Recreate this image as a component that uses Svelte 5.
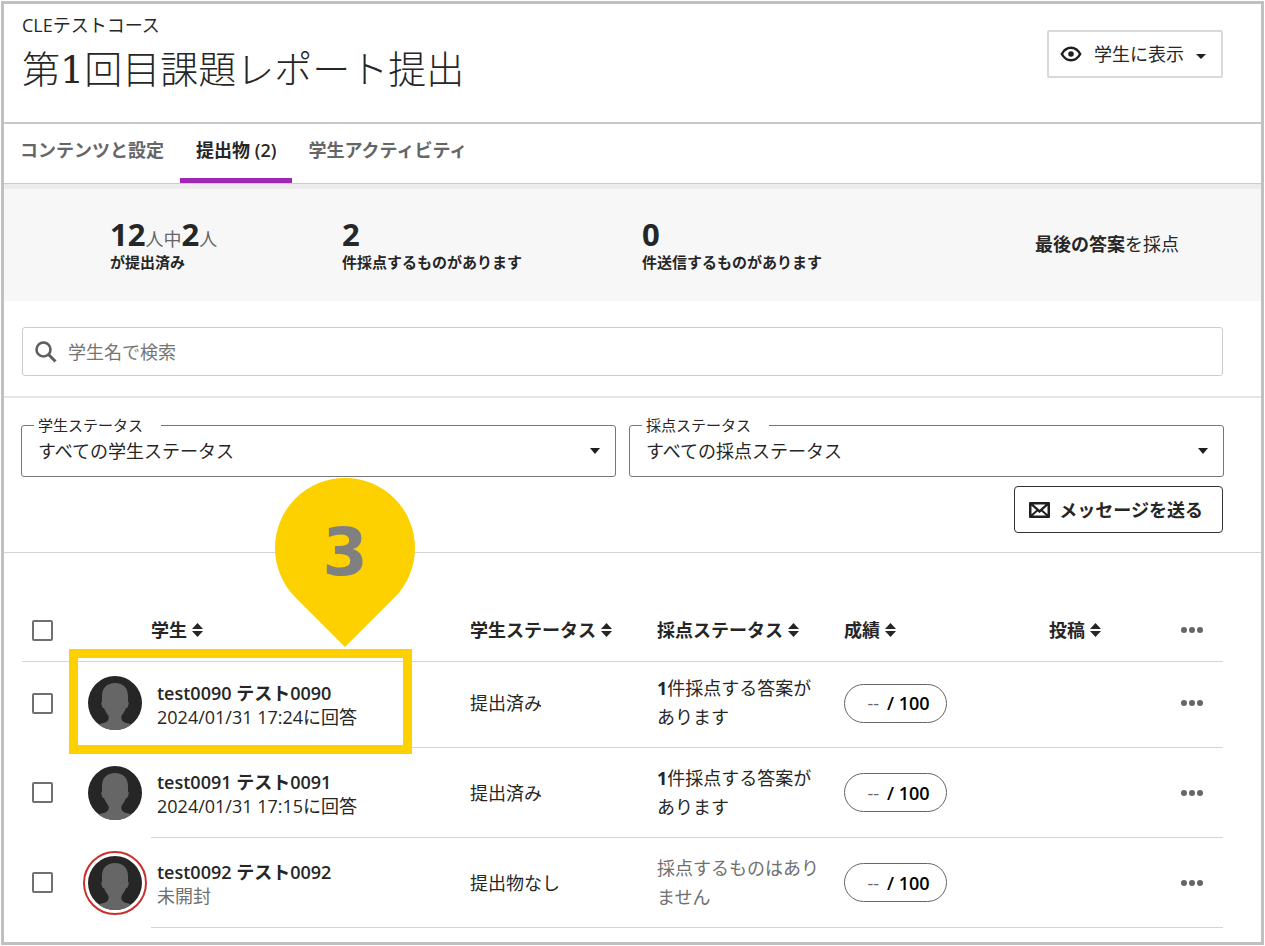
<script lang="ts">
	interface Submission {
		id: string;
		name: string;
		note: string;
		unopened: boolean;
		status: string;
		pending: number;
		grading: string;
	}

	const tabs = [
		{ id: 'content', label: 'コンテンツと設定' },
		{ id: 'submissions', label: '提出物 (2)' },
		{ id: 'activity', label: '学生アクティビティ' },
	];

	const submissions: Submission[] = [
		{
			id: 'test0090',
			name: 'test0090 テスト0090',
			note: '2024/01/31 17:24に回答',
			unopened: false,
			status: '提出済み',
			pending: 1,
			grading: '件採点する答案があります',
		},
		{
			id: 'test0091',
			name: 'test0091 テスト0091',
			note: '2024/01/31 17:15に回答',
			unopened: false,
			status: '提出済み',
			pending: 1,
			grading: '件採点する答案があります',
		},
		{
			id: 'test0092',
			name: 'test0092 テスト0092',
			note: '未開封',
			unopened: true,
			status: '提出物なし',
			pending: 0,
			grading: '採点するものはありません',
		},
	];

	const columns = [
		{ key: 'student', label: '学生' },
		{ key: 'status', label: '学生ステータス' },
		{ key: 'grading', label: '採点ステータス' },
		{ key: 'grade', label: '成績' },
		{ key: 'post', label: '投稿' },
	];

	const highlighted = 'test0090';

	let activeTab = 'submissions';
	let query = '';
	let selected: string[] = [];

	$: allSelected = selected.length === submissions.length;

	function toggleAll() {
		selected = allSelected ? [] : submissions.map((entry) => entry.id);
	}
</script>

<main class="page">
	<header class="page-head">
		<div class="titles">
			<p class="course">CLEテストコース</p>
			<h1>第1回目課題レポート提出</h1>
		</div>
		<button type="button" class="visibility">
			<svg width="22" height="16" viewBox="0 0 22 16" aria-hidden="true">
				<path d="M1.800 8C4 4 7 1.800 11 1.800S18 4 20.200 8C18 12 15 14.200 11 14.200S4 12 1.800 8Z" fill="none" stroke="#1f1f1f" stroke-width="2.500" />
				<circle cx="11" cy="8" r="2.800" fill="#1f1f1f" />
			</svg>
			<span>学生に表示</span>
			<svg class="caret" width="10" height="5" viewBox="0 0 10 5" aria-hidden="true">
				<path d="M0 0H10L5 5Z" fill="#1f1f1f" />
			</svg>
		</button>
	</header>

	<nav class="tabs">
		{#each tabs as tab}
			<button type="button" class="tab" class:active={activeTab === tab.id} on:click={() => (activeTab = tab.id)}>
				{tab.label}
			</button>
		{/each}
	</nav>

	<section class="stats">
		<div class="stat">
			<p class="figure"><strong>12</strong>人中<strong>2</strong>人</p>
			<p class="caption">が提出済み</p>
		</div>
		<div class="stat">
			<p class="figure"><strong>2</strong></p>
			<p class="caption">件採点するものがあります</p>
		</div>
		<div class="stat">
			<p class="figure"><strong>0</strong></p>
			<p class="caption">件送信するものがあります</p>
		</div>
		<p class="rule"><strong>最後の答案</strong>を採点</p>
	</section>

	<div class="search-row">
		<label class="search">
			<svg width="22" height="22" viewBox="0 0 22 22" aria-hidden="true">
				<circle cx="8.500" cy="8.500" r="7" fill="none" stroke="#5f5f5f" stroke-width="2.600" />
				<path d="M13.500 13.500L20.500 20.500" stroke="#5f5f5f" stroke-width="3" />
			</svg>
			<input type="text" placeholder="学生名で検索" aria-label="学生名で検索" bind:value={query} />
		</label>
	</div>

	<section class="filters">
		<div class="selects">
			<div class="field">
				<label for="student-status">学生ステータス</label>
				<select id="student-status">
					<option>すべての学生ステータス</option>
				</select>
				<svg width="10" height="6" viewBox="0 0 10 6" aria-hidden="true"><path d="M0 0H10L5 6Z" fill="#1f1f1f" /></svg>
			</div>
			<div class="field">
				<label for="grading-status">採点ステータス</label>
				<select id="grading-status">
					<option>すべての採点ステータス</option>
				</select>
				<svg width="10" height="6" viewBox="0 0 10 6" aria-hidden="true"><path d="M0 0H10L5 6Z" fill="#1f1f1f" /></svg>
			</div>
		</div>
		<button type="button" class="message">
			<svg width="21" height="16" viewBox="0 0 21 16" aria-hidden="true">
				<rect width="21" height="16" rx="1" fill="#1f1f1f" />
				<path d="M4.500 2.500H16.500L10.500 7.800ZM2.500 3.800L7.300 8L2.500 12.200ZM18.500 3.800L13.700 8L18.500 12.200ZM4 13.500L8.600 9.400L10.500 11L12.400 9.400L17 13.500Z" fill="#fff" />
			</svg>
			<span>メッセージを送る</span>
		</button>
	</section>

	<section class="roster">
		<table>
			<colgroup>
				<col class="col-check" />
				<col class="col-avatar" />
				<col />
				<col class="col-status" />
				<col class="col-grading" />
				<col class="col-grade" />
				<col class="col-post" />
				<col class="col-menu" />
			</colgroup>
			<thead>
				<tr>
					<th class="check">
						<input type="checkbox" aria-label="すべて選択" checked={allSelected} on:change={toggleAll} />
					</th>
					<th></th>
					{#each columns as column (column.key)}
						<th scope="col">
							<button type="button" class="sort">
								{column.label}
								<svg width="11" height="14" viewBox="0 0 11 14" aria-hidden="true">
									<path d="M5.500 0L11 6H0ZM5.500 14L11 8H0Z" fill="#262626" />
								</svg>
							</button>
						</th>
					{/each}
					<th class="menu">
						<button type="button" class="dots" aria-label="その他のオプション"><i></i><i></i><i></i></button>
					</th>
				</tr>
			</thead>
			<tbody>
				{#each submissions as entry (entry.id)}
					<tr>
						<td class="check">
							<input type="checkbox" aria-label={entry.name} value={entry.id} bind:group={selected} />
						</td>
						<td class="avatar-cell">
							<span class="avatar" class:unopened={entry.unopened}>
								<svg width="54" height="54" viewBox="0 0 54 54" aria-hidden="true">
									<circle cx="27" cy="27" r="27" fill="#262626" />
									<path
										d="M27 7C19 7 14 12 14 20V26C13 26 13 28 14 30C14.500 32 15 32 16 32C17.500 36 19.500 38 20.500 40C21.500 44 19 46 16 47C13.500 47.500 12 48 10.500 48.400A27 27 0 0 0 43.500 48.400C42 48 40.500 47.500 38 47C35 46 32.500 44 33.500 40C34.500 38 36.500 36 38 32C39 32 39.500 32 40 30C41 28 41 26 40 26V20C40 12 35 7 27 7Z"
										fill="#666"
									/>
								</svg>
							</span>
							{#if entry.id === highlighted}
								<div class="highlight"></div>
								<div class="pin">
									<svg width="140" height="169" viewBox="0 0 140 169" aria-hidden="true">
										<path d="M20.500 119.500A70 70 0 1 1 119.500 119.500L70 169Z" fill="#fdd000" />
									</svg>
									<span>3</span>
								</div>
							{/if}
						</td>
						<td class="student">
							<p class="name">{entry.name}</p>
							<p class="note" class:muted={entry.unopened}>{entry.note}</p>
						</td>
						<td>{entry.status}</td>
						<td class="grading" class:muted={entry.pending === 0}>
							{#if entry.pending > 0}<strong>{entry.pending}</strong>{/if}{entry.grading}
						</td>
						<td>
							<button type="button" class="pill"><span>--</span>/ 100</button>
						</td>
						<td></td>
						<td class="menu">
							<button type="button" class="dots" aria-label="その他のオプション"><i></i><i></i><i></i></button>
						</td>
					</tr>
				{/each}
			</tbody>
		</table>
	</section>
</main>

<style>
	:global(body) {
		background: #fff;
	}

	.page {
		box-sizing: border-box;
		margin: 1px;
		border: 3px solid #bfc0c0;
		padding-bottom: 14px;
		background: #fff;
		color: #262626;
		font-family: 'Open Sans', 'Noto Sans', 'Noto Sans CJK JP', sans-serif;
		font-size: 18px;
		line-height: 24px;
	}

	p,
	h1 {
		margin: 0;
	}

	button,
	input,
	select {
		font: inherit;
		color: inherit;
	}

	button {
		cursor: pointer;
	}

	.page-head {
		display: flex;
		justify-content: space-between;
		align-items: flex-start;
		padding: 9px 38px 25px 18px;
		border-bottom: 2px solid #c8c8c8;
	}

	h1 {
		margin-top: 6px;
		font-family: 'DejaVu Serif', 'Noto Sans CJK JP', serif;
		font-size: 38px;
		font-weight: 300;
		line-height: 54px;
	}

	.visibility {
		display: flex;
		align-items: center;
		gap: 12px;
		height: 48px;
		margin-top: 17px;
		padding: 0 15px 0 11px;
		border: 2px solid #d9d9d9;
		border-radius: 2px;
		background: #fff;
	}

	.caret {
		margin-top: 4px;
	}

	.tabs {
		display: flex;
		border-bottom: 1px solid #ccc;
	}

	.tab {
		height: 59px;
		padding: 0 16px 2px;
		border: 0;
		border-bottom: 5px solid transparent;
		background: none;
		color: #666;
		font-weight: 600;
	}

	.tab.active {
		border-color: #9e28b5;
		color: #262626;
	}

	.stats {
		display: grid;
		grid-template-columns: 232px 300px 1fr auto;
		align-items: start;
		padding: 35px 82px 31px 106px;
		border-top: 5px solid #ececec;
		background: #f7f7f7;
	}

	.figure {
		color: #666;
		line-height: 30px;
	}

	.figure strong {
		color: #262626;
		font-size: 31px;
		font-weight: 700;
		line-height: 20px;
	}

	.caption {
		font-size: 15px;
		font-weight: 700;
		line-height: 16px;
	}

	.rule {
		line-height: 40px;
	}

	.search-row {
		padding: 26px 38px 20px 18px;
		border-bottom: 2px solid #e6e6e6;
	}

	.search {
		display: flex;
		align-items: center;
		gap: 11px;
		height: 47px;
		padding: 0 12px;
		border: 1px solid #ccc;
		border-radius: 3px;
	}

	.search input {
		flex: 1;
		padding: 0;
		border: 0;
		outline: 0;
		background: none;
	}

	.search input::placeholder {
		color: #757575;
		opacity: 1;
	}

	.filters {
		display: flex;
		flex-direction: column;
		align-items: flex-end;
		gap: 9px;
		padding: 27px 37px 19px 17px;
		border-bottom: 1px solid #d4d4d4;
	}

	.selects {
		display: grid;
		grid-template-columns: 1fr 1fr;
		gap: 13px;
		width: 100%;
	}

	.field {
		position: relative;
	}

	.field label {
		position: absolute;
		top: -12px;
		left: 13px;
		padding: 0 18px 0 4px;
		background: #fff;
		font-size: 15px;
	}

	.field select {
		display: block;
		width: 100%;
		height: 52px;
		padding: 0 40px 0 16px;
		border: 1px solid #767676;
		border-radius: 3px;
		background: none;
		appearance: none;
	}

	.field svg {
		position: absolute;
		top: 23px;
		right: 16px;
		pointer-events: none;
	}

	.message {
		display: flex;
		align-items: center;
		gap: 9px;
		height: 47px;
		margin-right: 1px;
		padding: 0 19px 0 14px;
		border: 1px solid #333;
		border-radius: 4px;
		background: #fff;
		font-weight: 700;
	}

	.roster {
		padding: 46px 38px 0 18px;
	}

	table {
		width: 100%;
		table-layout: fixed;
		border-collapse: separate;
		border-spacing: 0;
	}

	.col-check {
		width: 61px;
	}

	.col-avatar {
		width: 68px;
	}

	.col-status,
	.col-grading {
		width: 187px;
	}

	.col-grade {
		width: 205px;
	}

	.col-post {
		width: 111px;
	}

	.col-menu {
		width: 63px;
	}

	th,
	td {
		box-sizing: border-box;
		padding: 0;
		border-bottom: 1px solid #d4d4d4;
		text-align: left;
		vertical-align: middle;
	}

	th {
		height: 63px;
	}

	td {
		height: 90px;
	}

	/* first row is shorter and its content sits a little higher */
	tbody tr:first-child td {
		height: 86px;
		padding-bottom: 3px;
	}

	td.check,
	.avatar-cell {
		border-bottom-color: transparent;
	}

	.check input {
		display: block;
		box-sizing: border-box;
		width: 21px;
		height: 21px;
		margin: 0 0 0 10px;
		border: 2px solid #707070;
		border-radius: 2px;
		background: #fff;
		appearance: none;
	}

	.check input:checked {
		background: #707070;
	}

	.sort {
		display: flex;
		align-items: center;
		gap: 5px;
		padding: 0;
		border: 0;
		background: none;
		font-weight: 700;
		white-space: nowrap;
	}

	.avatar-cell {
		position: relative;
	}

	.avatar {
		display: block;
		width: 54px;
		height: 54px;
		margin-left: 3px;
		padding: 2px;
		border: 0 solid transparent;
		border-radius: 50%;
	}

	.avatar.unopened {
		margin-left: 0;
		padding: 3px;
		border: 2px solid #c9302c;
	}

	.avatar svg {
		display: block;
	}

	.highlight {
		position: absolute;
		z-index: 1;
		top: -13px;
		left: -14px;
		box-sizing: border-box;
		width: 343px;
		height: 105px;
		border: 9px solid #fdd000;
		pointer-events: none;
	}

	.pin {
		position: absolute;
		z-index: 2;
		top: -184px;
		left: 192px;
		width: 140px;
		pointer-events: none;
	}

	.pin svg {
		display: block;
	}

	.pin span {
		position: absolute;
		top: 0;
		left: 0;
		width: 140px;
		color: #808080;
		font-family: 'DejaVu Sans', sans-serif;
		font-size: 65px;
		font-weight: 700;
		line-height: 150px;
		text-align: center;
	}

	.student {
		padding-top: 3px;
		padding-left: 6px;
	}

	.name {
		font-weight: 600;
	}

	.muted {
		color: #707070;
	}

	.grading {
		padding-right: 20px;
		line-height: 29px;
	}

	.pill {
		display: flex;
		align-items: center;
		justify-content: center;
		gap: 8px;
		width: 103px;
		height: 39px;
		padding: 0 0 0 6px;
		border: 1px solid #666;
		border-radius: 20px;
		background: #fff;
		color: #000;
		font-weight: 600;
	}

	.pill span {
		color: #666;
		font-weight: 400;
	}

	.dots {
		display: flex;
		justify-content: center;
		gap: 2px;
		width: 100%;
		padding: 8px 0;
		border: 0;
		background: none;
	}

	.dots i {
		width: 6px;
		height: 6px;
		border-radius: 50%;
		background: #666;
	}
</style>
